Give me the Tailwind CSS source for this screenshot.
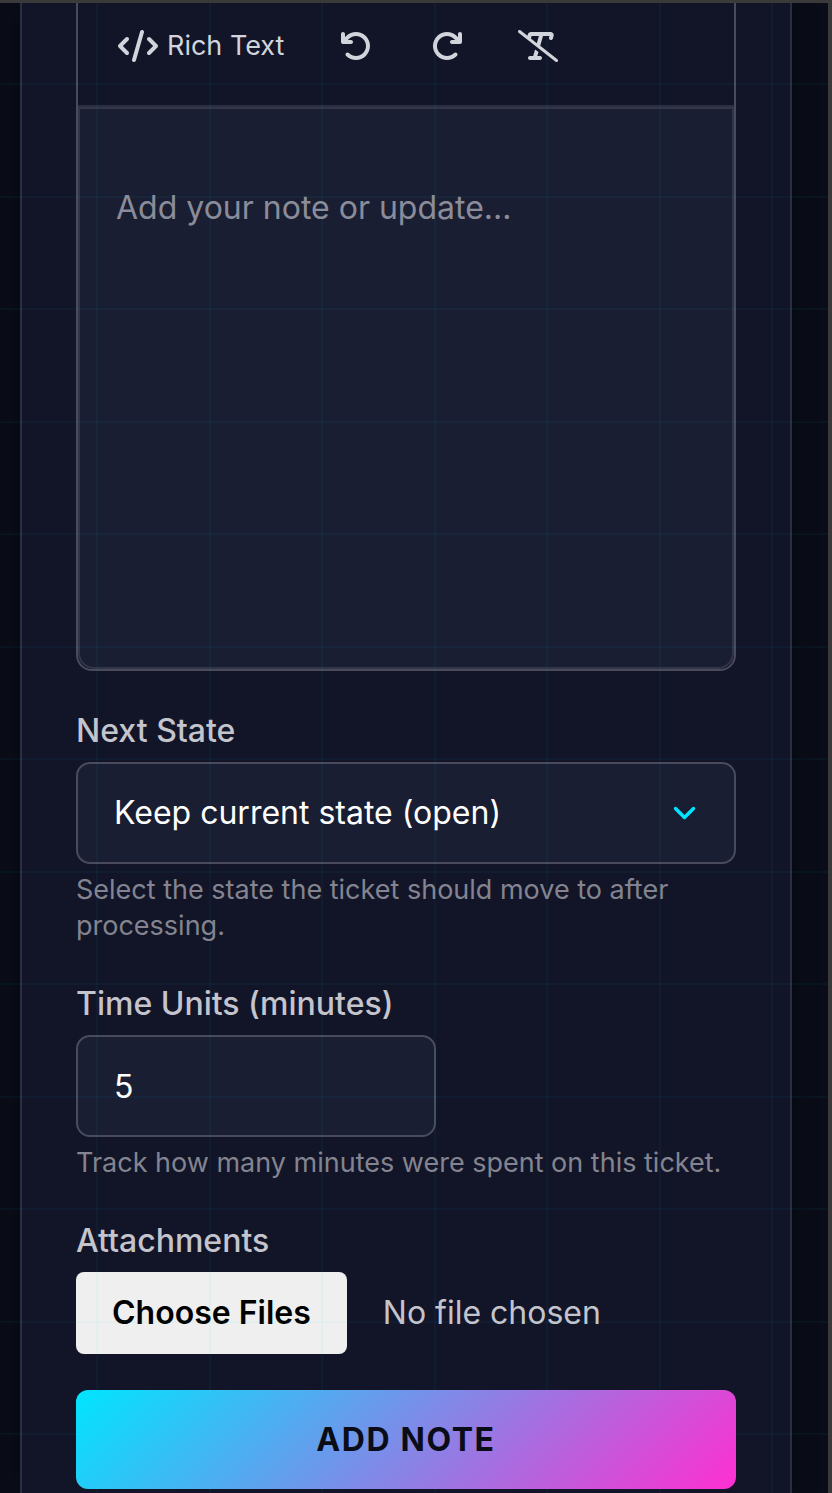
<!DOCTYPE html>
<html lang="en">
	<head>
		<meta charset="UTF-8" />
		<meta name="viewport" content="width=device-width, initial-scale=1.0" />
		<title>Ticket - Add Note</title>
		<script src="https://cdn.jsdelivr.net/npm/@tailwindcss/browser@4"></script>
	</head>
	<body class="min-h-screen flex flex-col border-t-3 border-r-4 border-[#3a3a3a] bg-[#0a0d18] font-['Inter',sans-serif] text-[32px] text-white">
		<!-- grid lines over the page -->
		<div class="fixed top-[3px] bottom-0 left-0 right-1 z-10 pointer-events-none bg-[linear-gradient(90deg,#00e5ff0a_2px,transparent_2px,transparent_113px,#00e5ff0a_113px,#00e5ff0a_115px,transparent_115px),linear-gradient(#00e5ff0a_2px,transparent_2px,transparent_113px,#00e5ff0a_113px,#00e5ff0a_115px,transparent_115px)] bg-size-[225px_225px] bg-position-[96px_80px]"></div>

		<main class="grow flex flex-col pl-5 pr-9 overflow-x-clip">
			<form id="note-form" class="grow border-x-2 border-[#2b2d40] bg-[#121428] px-[54px] pb-1 shadow-[0_0_24px_#00000066]">
				<div class="rounded-b-2xl border-2 border-t-0 border-[#494a5c] overflow-hidden">
					<div class="flex items-center gap-1 h-[104px] pb-4 pl-4 border-b-2 border-[#2b2d40] text-[#d1d5db]">
						<button type="button" class="flex items-center gap-[9px] h-16 px-6 text-[27px]">
							<svg class="w-10 h-8" viewBox="0 0 640 512" fill="currentColor" aria-hidden="true"><path d="M392.8 1.2c-17-4.9-34.7 5-39.6 22l-128 448c-4.9 17 5 34.7 22 39.6s34.7-5 39.6-22l128-448c4.9-17-5-34.7-22-39.6zm80.6 120.1c-12.5 12.5-12.5 32.8 0 45.3L562.7 256l-89.4 89.4c-12.5 12.5-12.5 32.8 0 45.3s32.8 12.5 45.3 0l112-112c12.5-12.5 12.5-32.8 0-45.3l-112-112c-12.5-12.5-32.8-12.5-45.3 0zm-306.7 0c-12.5-12.5-32.8-12.5-45.3 0l-112 112c-12.5 12.5-12.5 32.8 0 45.3l112 112c12.5 12.5 32.8 12.5 45.3 0s12.5-32.8 0-45.3L77.3 256l89.4-89.4c12.5-12.5 12.5-32.8 0-45.3z" /></svg>
							Rich Text
						</button>
						<button type="button" aria-label="Undo" class="flex items-center justify-center w-[87px] h-16">
							<svg class="size-8" viewBox="0 0 512 512" fill="currentColor" aria-hidden="true"><path d="M125.7 160H176c17.7 0 32 14.3 32 32s-14.3 32-32 32H48c-17.7 0-32-14.3-32-32V64c0-17.7 14.3-32 32-32s32 14.3 32 32v51.2L97.6 97.6c87.5-87.5 229.3-87.5 316.8 0s87.5 229.3 0 316.8s-229.3 87.5-316.8 0c-12.5-12.5-12.5-32.8 0-45.3s32.8-12.5 45.3 0c62.5 62.5 163.8 62.5 226.3 0s62.5-163.8 0-226.3s-163.8-62.5-226.3 0L125.7 160z" /></svg>
						</button>
						<button type="button" aria-label="Redo" class="flex items-center justify-center w-[87px] h-16">
							<svg class="size-8" viewBox="0 0 512 512" fill="currentColor" aria-hidden="true"><path d="M386.3 160H336c-17.7 0-32 14.3-32 32s14.3 32 32 32H464c17.7 0 32-14.3 32-32V64c0-17.7-14.3-32-32-32s-32 14.3-32 32v51.2L414.4 97.6c-87.5-87.5-229.3-87.5-316.8 0s-87.5 229.3 0 316.8s229.3 87.5 316.8 0c12.5-12.5 12.5-32.8 0-45.3s-32.8-12.5-45.3 0c-62.5 62.5-163.8 62.5-226.3 0s-62.5-163.8 0-226.3s163.8-62.5 226.3 0L386.3 160z" /></svg>
						</button>
						<button type="button" aria-label="Clear formatting" class="flex items-center justify-center w-[87px] h-16">
							<svg class="w-10 h-8" viewBox="0 0 640 512" fill="currentColor" aria-hidden="true"><path d="M38.8 5.1C28.4-3.1 13.3-1.2 5.1 9.2S-1.2 34.7 9.2 42.9l592 464c10.4 8.2 25.5 6.3 33.7-4.1s6.3-25.5-4.1-33.7L355.7 253.5 400.2 96H503L497 120.2c-4.3 17.1 6.1 34.5 23.3 38.8s34.5-6.1 38.8-23.3l11-44.1C577.6 61.3 554.7 32 523.5 32H376.1h-.3H204.5c-22 0-41.2 15-46.6 36.4l-6.3 25.2L38.8 5.1zm168 131.7c.1-.3 .2-.7 .3-1L217 96H333.7L301.3 210.8l-94.5-74.1zM243.3 416H192c-17.7 0-32 14.3-32 32s14.3 32 32 32H352c17.7 0 32-14.3 32-32s-14.3-32-32-32H309.8l17.6-62.1L272.9 311 243.3 416z" /></svg>
						</button>
					</div>
					<textarea
						id="note"
						name="note"
						aria-label="Note"
						placeholder="Add your note or update..."
						class="block w-full h-[562px] px-9 pt-[75px] resize-none rounded-b-2xl border-2 border-[#333548] bg-[#1a1e32] leading-12 placeholder:text-[#8b8c99]"
					></textarea>
				</div>

				<div class="mt-10">
					<label for="next-state" class="block mb-[11px] leading-10 font-medium text-[#c4c4cc]">Next State</label>
					<div class="relative">
						<select
							id="next-state"
							name="next_state"
							class="block w-full h-[102px] px-9 appearance-none rounded-[14px] border-2 border-[#494a5c] bg-[#1a1e32]"
						>
							<option>Keep current state (open)</option>
						</select>
						<svg class="absolute right-9 top-9 size-8 pointer-events-none" viewBox="0 0 32 32" fill="none" stroke="#00e5ff" stroke-width="3.500" stroke-linecap="round" stroke-linejoin="round" aria-hidden="true"><path d="M7.500 10.500l9 9 9-9" /></svg>
					</div>
					<p class="mt-2 text-[27px] leading-9 text-[#83848f]">Select the state the ticket should move to after processing.</p>
				</div>

				<div class="mt-10">
					<label for="time-units" class="block mb-[11px] leading-10 font-medium text-[#c4c4cc]">Time Units (minutes)</label>
					<input
						type="text"
						inputmode="numeric"
						id="time-units"
						name="time_units"
						value="5"
						class="block w-[360px] h-[102px] px-9 rounded-[14px] border-2 border-[#494a5c] bg-[#1a1e32]"
					/>
					<p class="mt-2 text-[27px] leading-9 text-[#83848f]">Track how many minutes were spent on this ticket.</p>
				</div>

				<div class="mt-10">
					<label for="attachments" class="block mb-[11px] leading-10 font-medium text-[#c4c4cc]">Attachments</label>
					<input
						type="file"
						id="attachments"
						name="attachments"
						multiple
						class="block w-full leading-10 text-[#c4c4cc] file:mr-9 file:h-[82px] file:px-9 file:rounded-lg file:bg-[#efefef] file:font-semibold file:text-black"
					/>
				</div>

				<button
					type="submit"
					class="relative z-20 block w-full h-[99px] mt-9 rounded-xl bg-[linear-gradient(135deg,#00e5ff,#ff2fd0)] font-bold tracking-wider text-[#0a0d18] uppercase"
				>
					Add Note
				</button>
			</form>
		</main>
	</body>
</html>
